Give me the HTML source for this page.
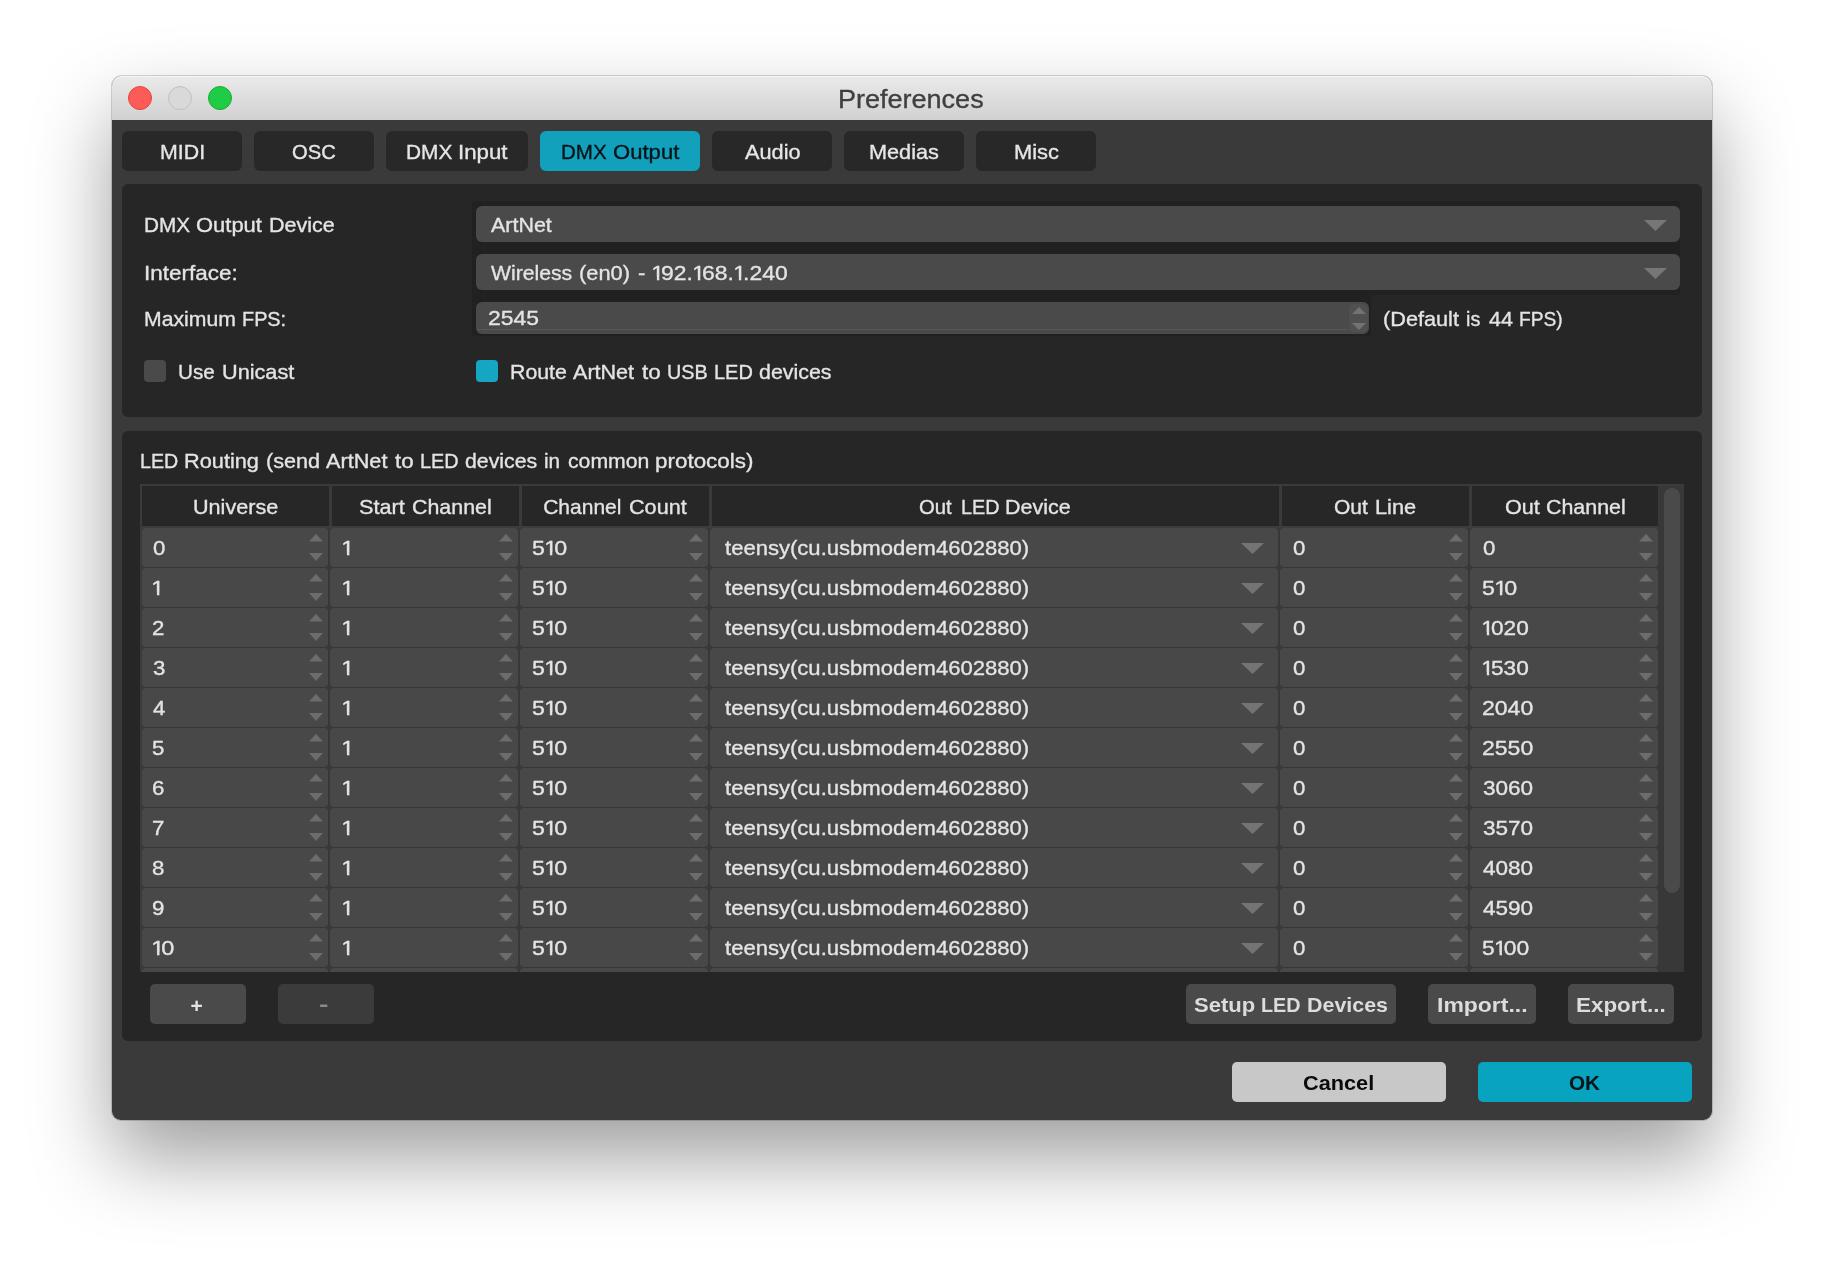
<!DOCTYPE html>
<html><head><meta charset="utf-8"><title>Preferences</title>
<style>
html,body{margin:0;padding:0;}
body{width:1824px;height:1268px;background:#fff;position:relative;overflow:hidden;font-family:"Liberation Sans",sans-serif;}
.b{position:absolute;display:block;}
.t i{font-style:normal;display:inline-block;margin:0 -2.7px 0 -0.65px;clip-path:polygon(0 0,100% 0,100% 73%,62.5% 73%,62.5% 100%,44% 100%,44% 73%,0 73%);}
.t{position:absolute;display:block;white-space:pre;transform-origin:0 0;-webkit-text-stroke:0.35px currentColor;}
#tx{position:absolute;left:0;top:0;width:1824px;height:1268px;will-change:transform;}
#win{position:absolute;left:112px;top:76px;width:1600px;height:1043.5px;border-radius:10px 10px 9px 9px;background:#3a3a3a;
 box-shadow:0 0 0 1px rgba(0,0,0,0.16),0 38px 80px rgba(0,0,0,0.38);}
#tb{position:absolute;left:112px;top:76px;width:1600px;height:44px;border-radius:10px 10px 0 0;
 background:linear-gradient(#eaeaea,#d1d1d1);box-shadow:inset 0 1px 0 #f6f6f6;}
.dot{position:absolute;top:86px;width:24px;height:24px;border-radius:50%;box-sizing:border-box;}
</style></head><body>
<div id="win"></div>
<div id="tb"></div>
<div class="dot" style="left:128px;background:#fd5b57;border:1px solid #e2463f;"></div>
<div class="dot" style="left:168px;background:#d9d9d9;border:1px solid #c2c2c2;"></div>
<div class="dot" style="left:208px;background:#1fcc46;border:1px solid #17ad33;"></div>
<div class="b" style="left:122px;top:131px;width:120px;height:40px;background:#282828;border-radius:6px;"></div>
<div class="b" style="left:254px;top:131px;width:120px;height:40px;background:#282828;border-radius:6px;"></div>
<div class="b" style="left:386px;top:131px;width:142px;height:40px;background:#282828;border-radius:6px;"></div>
<div class="b" style="left:540px;top:131px;width:160px;height:40px;background:#12a1bd;border-radius:6px;"></div>
<div class="b" style="left:712px;top:131px;width:120px;height:40px;background:#282828;border-radius:6px;"></div>
<div class="b" style="left:844px;top:131px;width:120px;height:40px;background:#282828;border-radius:6px;"></div>
<div class="b" style="left:976px;top:131px;width:120px;height:40px;background:#282828;border-radius:6px;"></div>
<div class="b" style="left:122px;top:184px;width:1580px;height:233px;background:#262626;border-radius:6px;"></div>
<div class="b" style="left:472px;top:201px;width:1208px;height:94px;background:#212121;border-radius:3px;"></div>
<div class="b" style="left:472px;top:291px;width:899px;height:45px;background:#212121;border-radius:3px;"></div>
<div class="b" style="left:476px;top:206px;width:1204px;height:36px;background:#4a4a4a;border-radius:6px;"></div>
<svg class="b" style="left:1644px;top:220px" width="23" height="11" viewBox="0 0 23 11"><path d="M0 0H23L11.5 11Z" fill="#767676"/></svg>
<div class="b" style="left:476px;top:254px;width:1204px;height:36px;background:#4a4a4a;border-radius:6px;"></div>
<svg class="b" style="left:1644px;top:268px" width="23" height="11" viewBox="0 0 23 11"><path d="M0 0H23L11.5 11Z" fill="#767676"/></svg>
<div class="b" style="left:476px;top:302px;width:893px;height:32px;background:#4a4a4a;border-radius:6px;"></div>
<div class="b" style="left:1349px;top:304px;width:19px;height:28px;background:#505050;border-radius:5px;"></div>
<div class="b" style="left:478px;top:329px;width:870px;height:1px;background:#585858;"></div>
<svg class="b" style="left:1352px;top:307px" width="14" height="7" viewBox="0 0 14 7"><path d="M0 7H14L7.0 0Z" fill="#727272"/></svg>
<svg class="b" style="left:1352px;top:323px" width="14" height="7" viewBox="0 0 14 7"><path d="M0 0H14L7.0 7Z" fill="#727272"/></svg>
<div class="b" style="left:144px;top:360px;width:22px;height:22px;background:#4a4a4a;border-radius:4px;"></div>
<div class="b" style="left:476px;top:360px;width:22px;height:22px;background:#14a6c2;border-radius:4px;"></div>
<div class="b" style="left:122px;top:431px;width:1580px;height:610px;background:#262626;border-radius:6px;"></div>
<div class="b" style="left:140px;top:484px;width:1544px;height:488px;background:#3b3b3b;"></div>
<div class="b" style="left:142px;top:486px;width:1516px;height:39.5px;background:#272727;"></div>
<div class="b" style="left:142px;top:525.5px;width:1516px;height:2.5px;background:#3d3d3d;"></div>
<div class="b" style="left:328.5px;top:486px;width:3.5px;height:40px;background:#3a3a3a;"></div>
<div class="b" style="left:518.5px;top:486px;width:3.5px;height:40px;background:#3a3a3a;"></div>
<div class="b" style="left:708.5px;top:486px;width:3.5px;height:40px;background:#3a3a3a;"></div>
<div class="b" style="left:1278.5px;top:486px;width:3.5px;height:40px;background:#3a3a3a;"></div>
<div class="b" style="left:1468.5px;top:486px;width:3.5px;height:40px;background:#3a3a3a;"></div>
<div class="b" style="left:142px;top:528px;width:1516px;height:444px;background:#383838;"></div>
<div class="b" style="left:142px;top:528px;width:186px;height:38.6px;background:#484848;border-radius:4px"></div>
<svg class="b" style="left:309px;top:534px" width="14" height="7.5" viewBox="0 0 14 7.5"><path d="M0 7.5H14L7.0 0Z" fill="#6c6c6c"/></svg>
<svg class="b" style="left:309px;top:553px" width="14" height="8" viewBox="0 0 14 8"><path d="M0 0H14L7.0 8Z" fill="#6c6c6c"/></svg>
<div class="b" style="left:142px;top:568px;width:186px;height:38.6px;background:#484848;border-radius:4px"></div>
<svg class="b" style="left:309px;top:574px" width="14" height="7.5" viewBox="0 0 14 7.5"><path d="M0 7.5H14L7.0 0Z" fill="#6c6c6c"/></svg>
<svg class="b" style="left:309px;top:593px" width="14" height="8" viewBox="0 0 14 8"><path d="M0 0H14L7.0 8Z" fill="#6c6c6c"/></svg>
<div class="b" style="left:142px;top:608px;width:186px;height:38.6px;background:#484848;border-radius:4px"></div>
<svg class="b" style="left:309px;top:614px" width="14" height="7.5" viewBox="0 0 14 7.5"><path d="M0 7.5H14L7.0 0Z" fill="#6c6c6c"/></svg>
<svg class="b" style="left:309px;top:633px" width="14" height="8" viewBox="0 0 14 8"><path d="M0 0H14L7.0 8Z" fill="#6c6c6c"/></svg>
<div class="b" style="left:142px;top:648px;width:186px;height:38.6px;background:#484848;border-radius:4px"></div>
<svg class="b" style="left:309px;top:654px" width="14" height="7.5" viewBox="0 0 14 7.5"><path d="M0 7.5H14L7.0 0Z" fill="#6c6c6c"/></svg>
<svg class="b" style="left:309px;top:673px" width="14" height="8" viewBox="0 0 14 8"><path d="M0 0H14L7.0 8Z" fill="#6c6c6c"/></svg>
<div class="b" style="left:142px;top:688px;width:186px;height:38.6px;background:#484848;border-radius:4px"></div>
<svg class="b" style="left:309px;top:694px" width="14" height="7.5" viewBox="0 0 14 7.5"><path d="M0 7.5H14L7.0 0Z" fill="#6c6c6c"/></svg>
<svg class="b" style="left:309px;top:713px" width="14" height="8" viewBox="0 0 14 8"><path d="M0 0H14L7.0 8Z" fill="#6c6c6c"/></svg>
<div class="b" style="left:142px;top:728px;width:186px;height:38.6px;background:#484848;border-radius:4px"></div>
<svg class="b" style="left:309px;top:734px" width="14" height="7.5" viewBox="0 0 14 7.5"><path d="M0 7.5H14L7.0 0Z" fill="#6c6c6c"/></svg>
<svg class="b" style="left:309px;top:753px" width="14" height="8" viewBox="0 0 14 8"><path d="M0 0H14L7.0 8Z" fill="#6c6c6c"/></svg>
<div class="b" style="left:142px;top:768px;width:186px;height:38.6px;background:#484848;border-radius:4px"></div>
<svg class="b" style="left:309px;top:774px" width="14" height="7.5" viewBox="0 0 14 7.5"><path d="M0 7.5H14L7.0 0Z" fill="#6c6c6c"/></svg>
<svg class="b" style="left:309px;top:793px" width="14" height="8" viewBox="0 0 14 8"><path d="M0 0H14L7.0 8Z" fill="#6c6c6c"/></svg>
<div class="b" style="left:142px;top:808px;width:186px;height:38.6px;background:#484848;border-radius:4px"></div>
<svg class="b" style="left:309px;top:814px" width="14" height="7.5" viewBox="0 0 14 7.5"><path d="M0 7.5H14L7.0 0Z" fill="#6c6c6c"/></svg>
<svg class="b" style="left:309px;top:833px" width="14" height="8" viewBox="0 0 14 8"><path d="M0 0H14L7.0 8Z" fill="#6c6c6c"/></svg>
<div class="b" style="left:142px;top:848px;width:186px;height:38.6px;background:#484848;border-radius:4px"></div>
<svg class="b" style="left:309px;top:854px" width="14" height="7.5" viewBox="0 0 14 7.5"><path d="M0 7.5H14L7.0 0Z" fill="#6c6c6c"/></svg>
<svg class="b" style="left:309px;top:873px" width="14" height="8" viewBox="0 0 14 8"><path d="M0 0H14L7.0 8Z" fill="#6c6c6c"/></svg>
<div class="b" style="left:142px;top:888px;width:186px;height:38.6px;background:#484848;border-radius:4px"></div>
<svg class="b" style="left:309px;top:894px" width="14" height="7.5" viewBox="0 0 14 7.5"><path d="M0 7.5H14L7.0 0Z" fill="#6c6c6c"/></svg>
<svg class="b" style="left:309px;top:913px" width="14" height="8" viewBox="0 0 14 8"><path d="M0 0H14L7.0 8Z" fill="#6c6c6c"/></svg>
<div class="b" style="left:142px;top:928px;width:186px;height:38.6px;background:#484848;border-radius:4px"></div>
<svg class="b" style="left:309px;top:934px" width="14" height="7.5" viewBox="0 0 14 7.5"><path d="M0 7.5H14L7.0 0Z" fill="#6c6c6c"/></svg>
<svg class="b" style="left:309px;top:953px" width="14" height="8" viewBox="0 0 14 8"><path d="M0 0H14L7.0 8Z" fill="#6c6c6c"/></svg>
<div class="b" style="left:142px;top:968px;width:186px;height:4px;background:#484848;border-radius:4px 4px 0 0"></div>
<div class="b" style="left:330px;top:528px;width:188px;height:38.6px;background:#484848;border-radius:4px"></div>
<svg class="b" style="left:499px;top:534px" width="14" height="7.5" viewBox="0 0 14 7.5"><path d="M0 7.5H14L7.0 0Z" fill="#6c6c6c"/></svg>
<svg class="b" style="left:499px;top:553px" width="14" height="8" viewBox="0 0 14 8"><path d="M0 0H14L7.0 8Z" fill="#6c6c6c"/></svg>
<div class="b" style="left:330px;top:568px;width:188px;height:38.6px;background:#484848;border-radius:4px"></div>
<svg class="b" style="left:499px;top:574px" width="14" height="7.5" viewBox="0 0 14 7.5"><path d="M0 7.5H14L7.0 0Z" fill="#6c6c6c"/></svg>
<svg class="b" style="left:499px;top:593px" width="14" height="8" viewBox="0 0 14 8"><path d="M0 0H14L7.0 8Z" fill="#6c6c6c"/></svg>
<div class="b" style="left:330px;top:608px;width:188px;height:38.6px;background:#484848;border-radius:4px"></div>
<svg class="b" style="left:499px;top:614px" width="14" height="7.5" viewBox="0 0 14 7.5"><path d="M0 7.5H14L7.0 0Z" fill="#6c6c6c"/></svg>
<svg class="b" style="left:499px;top:633px" width="14" height="8" viewBox="0 0 14 8"><path d="M0 0H14L7.0 8Z" fill="#6c6c6c"/></svg>
<div class="b" style="left:330px;top:648px;width:188px;height:38.6px;background:#484848;border-radius:4px"></div>
<svg class="b" style="left:499px;top:654px" width="14" height="7.5" viewBox="0 0 14 7.5"><path d="M0 7.5H14L7.0 0Z" fill="#6c6c6c"/></svg>
<svg class="b" style="left:499px;top:673px" width="14" height="8" viewBox="0 0 14 8"><path d="M0 0H14L7.0 8Z" fill="#6c6c6c"/></svg>
<div class="b" style="left:330px;top:688px;width:188px;height:38.6px;background:#484848;border-radius:4px"></div>
<svg class="b" style="left:499px;top:694px" width="14" height="7.5" viewBox="0 0 14 7.5"><path d="M0 7.5H14L7.0 0Z" fill="#6c6c6c"/></svg>
<svg class="b" style="left:499px;top:713px" width="14" height="8" viewBox="0 0 14 8"><path d="M0 0H14L7.0 8Z" fill="#6c6c6c"/></svg>
<div class="b" style="left:330px;top:728px;width:188px;height:38.6px;background:#484848;border-radius:4px"></div>
<svg class="b" style="left:499px;top:734px" width="14" height="7.5" viewBox="0 0 14 7.5"><path d="M0 7.5H14L7.0 0Z" fill="#6c6c6c"/></svg>
<svg class="b" style="left:499px;top:753px" width="14" height="8" viewBox="0 0 14 8"><path d="M0 0H14L7.0 8Z" fill="#6c6c6c"/></svg>
<div class="b" style="left:330px;top:768px;width:188px;height:38.6px;background:#484848;border-radius:4px"></div>
<svg class="b" style="left:499px;top:774px" width="14" height="7.5" viewBox="0 0 14 7.5"><path d="M0 7.5H14L7.0 0Z" fill="#6c6c6c"/></svg>
<svg class="b" style="left:499px;top:793px" width="14" height="8" viewBox="0 0 14 8"><path d="M0 0H14L7.0 8Z" fill="#6c6c6c"/></svg>
<div class="b" style="left:330px;top:808px;width:188px;height:38.6px;background:#484848;border-radius:4px"></div>
<svg class="b" style="left:499px;top:814px" width="14" height="7.5" viewBox="0 0 14 7.5"><path d="M0 7.5H14L7.0 0Z" fill="#6c6c6c"/></svg>
<svg class="b" style="left:499px;top:833px" width="14" height="8" viewBox="0 0 14 8"><path d="M0 0H14L7.0 8Z" fill="#6c6c6c"/></svg>
<div class="b" style="left:330px;top:848px;width:188px;height:38.6px;background:#484848;border-radius:4px"></div>
<svg class="b" style="left:499px;top:854px" width="14" height="7.5" viewBox="0 0 14 7.5"><path d="M0 7.5H14L7.0 0Z" fill="#6c6c6c"/></svg>
<svg class="b" style="left:499px;top:873px" width="14" height="8" viewBox="0 0 14 8"><path d="M0 0H14L7.0 8Z" fill="#6c6c6c"/></svg>
<div class="b" style="left:330px;top:888px;width:188px;height:38.6px;background:#484848;border-radius:4px"></div>
<svg class="b" style="left:499px;top:894px" width="14" height="7.5" viewBox="0 0 14 7.5"><path d="M0 7.5H14L7.0 0Z" fill="#6c6c6c"/></svg>
<svg class="b" style="left:499px;top:913px" width="14" height="8" viewBox="0 0 14 8"><path d="M0 0H14L7.0 8Z" fill="#6c6c6c"/></svg>
<div class="b" style="left:330px;top:928px;width:188px;height:38.6px;background:#484848;border-radius:4px"></div>
<svg class="b" style="left:499px;top:934px" width="14" height="7.5" viewBox="0 0 14 7.5"><path d="M0 7.5H14L7.0 0Z" fill="#6c6c6c"/></svg>
<svg class="b" style="left:499px;top:953px" width="14" height="8" viewBox="0 0 14 8"><path d="M0 0H14L7.0 8Z" fill="#6c6c6c"/></svg>
<div class="b" style="left:330px;top:968px;width:188px;height:4px;background:#484848;border-radius:4px 4px 0 0"></div>
<div class="b" style="left:520px;top:528px;width:188px;height:38.6px;background:#484848;border-radius:4px"></div>
<svg class="b" style="left:689px;top:534px" width="14" height="7.5" viewBox="0 0 14 7.5"><path d="M0 7.5H14L7.0 0Z" fill="#6c6c6c"/></svg>
<svg class="b" style="left:689px;top:553px" width="14" height="8" viewBox="0 0 14 8"><path d="M0 0H14L7.0 8Z" fill="#6c6c6c"/></svg>
<div class="b" style="left:520px;top:568px;width:188px;height:38.6px;background:#484848;border-radius:4px"></div>
<svg class="b" style="left:689px;top:574px" width="14" height="7.5" viewBox="0 0 14 7.5"><path d="M0 7.5H14L7.0 0Z" fill="#6c6c6c"/></svg>
<svg class="b" style="left:689px;top:593px" width="14" height="8" viewBox="0 0 14 8"><path d="M0 0H14L7.0 8Z" fill="#6c6c6c"/></svg>
<div class="b" style="left:520px;top:608px;width:188px;height:38.6px;background:#484848;border-radius:4px"></div>
<svg class="b" style="left:689px;top:614px" width="14" height="7.5" viewBox="0 0 14 7.5"><path d="M0 7.5H14L7.0 0Z" fill="#6c6c6c"/></svg>
<svg class="b" style="left:689px;top:633px" width="14" height="8" viewBox="0 0 14 8"><path d="M0 0H14L7.0 8Z" fill="#6c6c6c"/></svg>
<div class="b" style="left:520px;top:648px;width:188px;height:38.6px;background:#484848;border-radius:4px"></div>
<svg class="b" style="left:689px;top:654px" width="14" height="7.5" viewBox="0 0 14 7.5"><path d="M0 7.5H14L7.0 0Z" fill="#6c6c6c"/></svg>
<svg class="b" style="left:689px;top:673px" width="14" height="8" viewBox="0 0 14 8"><path d="M0 0H14L7.0 8Z" fill="#6c6c6c"/></svg>
<div class="b" style="left:520px;top:688px;width:188px;height:38.6px;background:#484848;border-radius:4px"></div>
<svg class="b" style="left:689px;top:694px" width="14" height="7.5" viewBox="0 0 14 7.5"><path d="M0 7.5H14L7.0 0Z" fill="#6c6c6c"/></svg>
<svg class="b" style="left:689px;top:713px" width="14" height="8" viewBox="0 0 14 8"><path d="M0 0H14L7.0 8Z" fill="#6c6c6c"/></svg>
<div class="b" style="left:520px;top:728px;width:188px;height:38.6px;background:#484848;border-radius:4px"></div>
<svg class="b" style="left:689px;top:734px" width="14" height="7.5" viewBox="0 0 14 7.5"><path d="M0 7.5H14L7.0 0Z" fill="#6c6c6c"/></svg>
<svg class="b" style="left:689px;top:753px" width="14" height="8" viewBox="0 0 14 8"><path d="M0 0H14L7.0 8Z" fill="#6c6c6c"/></svg>
<div class="b" style="left:520px;top:768px;width:188px;height:38.6px;background:#484848;border-radius:4px"></div>
<svg class="b" style="left:689px;top:774px" width="14" height="7.5" viewBox="0 0 14 7.5"><path d="M0 7.5H14L7.0 0Z" fill="#6c6c6c"/></svg>
<svg class="b" style="left:689px;top:793px" width="14" height="8" viewBox="0 0 14 8"><path d="M0 0H14L7.0 8Z" fill="#6c6c6c"/></svg>
<div class="b" style="left:520px;top:808px;width:188px;height:38.6px;background:#484848;border-radius:4px"></div>
<svg class="b" style="left:689px;top:814px" width="14" height="7.5" viewBox="0 0 14 7.5"><path d="M0 7.5H14L7.0 0Z" fill="#6c6c6c"/></svg>
<svg class="b" style="left:689px;top:833px" width="14" height="8" viewBox="0 0 14 8"><path d="M0 0H14L7.0 8Z" fill="#6c6c6c"/></svg>
<div class="b" style="left:520px;top:848px;width:188px;height:38.6px;background:#484848;border-radius:4px"></div>
<svg class="b" style="left:689px;top:854px" width="14" height="7.5" viewBox="0 0 14 7.5"><path d="M0 7.5H14L7.0 0Z" fill="#6c6c6c"/></svg>
<svg class="b" style="left:689px;top:873px" width="14" height="8" viewBox="0 0 14 8"><path d="M0 0H14L7.0 8Z" fill="#6c6c6c"/></svg>
<div class="b" style="left:520px;top:888px;width:188px;height:38.6px;background:#484848;border-radius:4px"></div>
<svg class="b" style="left:689px;top:894px" width="14" height="7.5" viewBox="0 0 14 7.5"><path d="M0 7.5H14L7.0 0Z" fill="#6c6c6c"/></svg>
<svg class="b" style="left:689px;top:913px" width="14" height="8" viewBox="0 0 14 8"><path d="M0 0H14L7.0 8Z" fill="#6c6c6c"/></svg>
<div class="b" style="left:520px;top:928px;width:188px;height:38.6px;background:#484848;border-radius:4px"></div>
<svg class="b" style="left:689px;top:934px" width="14" height="7.5" viewBox="0 0 14 7.5"><path d="M0 7.5H14L7.0 0Z" fill="#6c6c6c"/></svg>
<svg class="b" style="left:689px;top:953px" width="14" height="8" viewBox="0 0 14 8"><path d="M0 0H14L7.0 8Z" fill="#6c6c6c"/></svg>
<div class="b" style="left:520px;top:968px;width:188px;height:4px;background:#484848;border-radius:4px 4px 0 0"></div>
<div class="b" style="left:710px;top:528px;width:568px;height:38.6px;background:#484848;border-radius:4px"></div>
<svg class="b" style="left:1241px;top:542.5px" width="23" height="11" viewBox="0 0 23 11"><path d="M0 0H23L11.5 11Z" fill="#747474"/></svg>
<div class="b" style="left:710px;top:568px;width:568px;height:38.6px;background:#484848;border-radius:4px"></div>
<svg class="b" style="left:1241px;top:582.5px" width="23" height="11" viewBox="0 0 23 11"><path d="M0 0H23L11.5 11Z" fill="#747474"/></svg>
<div class="b" style="left:710px;top:608px;width:568px;height:38.6px;background:#484848;border-radius:4px"></div>
<svg class="b" style="left:1241px;top:622.5px" width="23" height="11" viewBox="0 0 23 11"><path d="M0 0H23L11.5 11Z" fill="#747474"/></svg>
<div class="b" style="left:710px;top:648px;width:568px;height:38.6px;background:#484848;border-radius:4px"></div>
<svg class="b" style="left:1241px;top:662.5px" width="23" height="11" viewBox="0 0 23 11"><path d="M0 0H23L11.5 11Z" fill="#747474"/></svg>
<div class="b" style="left:710px;top:688px;width:568px;height:38.6px;background:#484848;border-radius:4px"></div>
<svg class="b" style="left:1241px;top:702.5px" width="23" height="11" viewBox="0 0 23 11"><path d="M0 0H23L11.5 11Z" fill="#747474"/></svg>
<div class="b" style="left:710px;top:728px;width:568px;height:38.6px;background:#484848;border-radius:4px"></div>
<svg class="b" style="left:1241px;top:742.5px" width="23" height="11" viewBox="0 0 23 11"><path d="M0 0H23L11.5 11Z" fill="#747474"/></svg>
<div class="b" style="left:710px;top:768px;width:568px;height:38.6px;background:#484848;border-radius:4px"></div>
<svg class="b" style="left:1241px;top:782.5px" width="23" height="11" viewBox="0 0 23 11"><path d="M0 0H23L11.5 11Z" fill="#747474"/></svg>
<div class="b" style="left:710px;top:808px;width:568px;height:38.6px;background:#484848;border-radius:4px"></div>
<svg class="b" style="left:1241px;top:822.5px" width="23" height="11" viewBox="0 0 23 11"><path d="M0 0H23L11.5 11Z" fill="#747474"/></svg>
<div class="b" style="left:710px;top:848px;width:568px;height:38.6px;background:#484848;border-radius:4px"></div>
<svg class="b" style="left:1241px;top:862.5px" width="23" height="11" viewBox="0 0 23 11"><path d="M0 0H23L11.5 11Z" fill="#747474"/></svg>
<div class="b" style="left:710px;top:888px;width:568px;height:38.6px;background:#484848;border-radius:4px"></div>
<svg class="b" style="left:1241px;top:902.5px" width="23" height="11" viewBox="0 0 23 11"><path d="M0 0H23L11.5 11Z" fill="#747474"/></svg>
<div class="b" style="left:710px;top:928px;width:568px;height:38.6px;background:#484848;border-radius:4px"></div>
<svg class="b" style="left:1241px;top:942.5px" width="23" height="11" viewBox="0 0 23 11"><path d="M0 0H23L11.5 11Z" fill="#747474"/></svg>
<div class="b" style="left:710px;top:968px;width:568px;height:4px;background:#484848;border-radius:4px 4px 0 0"></div>
<div class="b" style="left:1280px;top:528px;width:188px;height:38.6px;background:#484848;border-radius:4px"></div>
<svg class="b" style="left:1449px;top:534px" width="14" height="7.5" viewBox="0 0 14 7.5"><path d="M0 7.5H14L7.0 0Z" fill="#6c6c6c"/></svg>
<svg class="b" style="left:1449px;top:553px" width="14" height="8" viewBox="0 0 14 8"><path d="M0 0H14L7.0 8Z" fill="#6c6c6c"/></svg>
<div class="b" style="left:1280px;top:568px;width:188px;height:38.6px;background:#484848;border-radius:4px"></div>
<svg class="b" style="left:1449px;top:574px" width="14" height="7.5" viewBox="0 0 14 7.5"><path d="M0 7.5H14L7.0 0Z" fill="#6c6c6c"/></svg>
<svg class="b" style="left:1449px;top:593px" width="14" height="8" viewBox="0 0 14 8"><path d="M0 0H14L7.0 8Z" fill="#6c6c6c"/></svg>
<div class="b" style="left:1280px;top:608px;width:188px;height:38.6px;background:#484848;border-radius:4px"></div>
<svg class="b" style="left:1449px;top:614px" width="14" height="7.5" viewBox="0 0 14 7.5"><path d="M0 7.5H14L7.0 0Z" fill="#6c6c6c"/></svg>
<svg class="b" style="left:1449px;top:633px" width="14" height="8" viewBox="0 0 14 8"><path d="M0 0H14L7.0 8Z" fill="#6c6c6c"/></svg>
<div class="b" style="left:1280px;top:648px;width:188px;height:38.6px;background:#484848;border-radius:4px"></div>
<svg class="b" style="left:1449px;top:654px" width="14" height="7.5" viewBox="0 0 14 7.5"><path d="M0 7.5H14L7.0 0Z" fill="#6c6c6c"/></svg>
<svg class="b" style="left:1449px;top:673px" width="14" height="8" viewBox="0 0 14 8"><path d="M0 0H14L7.0 8Z" fill="#6c6c6c"/></svg>
<div class="b" style="left:1280px;top:688px;width:188px;height:38.6px;background:#484848;border-radius:4px"></div>
<svg class="b" style="left:1449px;top:694px" width="14" height="7.5" viewBox="0 0 14 7.5"><path d="M0 7.5H14L7.0 0Z" fill="#6c6c6c"/></svg>
<svg class="b" style="left:1449px;top:713px" width="14" height="8" viewBox="0 0 14 8"><path d="M0 0H14L7.0 8Z" fill="#6c6c6c"/></svg>
<div class="b" style="left:1280px;top:728px;width:188px;height:38.6px;background:#484848;border-radius:4px"></div>
<svg class="b" style="left:1449px;top:734px" width="14" height="7.5" viewBox="0 0 14 7.5"><path d="M0 7.5H14L7.0 0Z" fill="#6c6c6c"/></svg>
<svg class="b" style="left:1449px;top:753px" width="14" height="8" viewBox="0 0 14 8"><path d="M0 0H14L7.0 8Z" fill="#6c6c6c"/></svg>
<div class="b" style="left:1280px;top:768px;width:188px;height:38.6px;background:#484848;border-radius:4px"></div>
<svg class="b" style="left:1449px;top:774px" width="14" height="7.5" viewBox="0 0 14 7.5"><path d="M0 7.5H14L7.0 0Z" fill="#6c6c6c"/></svg>
<svg class="b" style="left:1449px;top:793px" width="14" height="8" viewBox="0 0 14 8"><path d="M0 0H14L7.0 8Z" fill="#6c6c6c"/></svg>
<div class="b" style="left:1280px;top:808px;width:188px;height:38.6px;background:#484848;border-radius:4px"></div>
<svg class="b" style="left:1449px;top:814px" width="14" height="7.5" viewBox="0 0 14 7.5"><path d="M0 7.5H14L7.0 0Z" fill="#6c6c6c"/></svg>
<svg class="b" style="left:1449px;top:833px" width="14" height="8" viewBox="0 0 14 8"><path d="M0 0H14L7.0 8Z" fill="#6c6c6c"/></svg>
<div class="b" style="left:1280px;top:848px;width:188px;height:38.6px;background:#484848;border-radius:4px"></div>
<svg class="b" style="left:1449px;top:854px" width="14" height="7.5" viewBox="0 0 14 7.5"><path d="M0 7.5H14L7.0 0Z" fill="#6c6c6c"/></svg>
<svg class="b" style="left:1449px;top:873px" width="14" height="8" viewBox="0 0 14 8"><path d="M0 0H14L7.0 8Z" fill="#6c6c6c"/></svg>
<div class="b" style="left:1280px;top:888px;width:188px;height:38.6px;background:#484848;border-radius:4px"></div>
<svg class="b" style="left:1449px;top:894px" width="14" height="7.5" viewBox="0 0 14 7.5"><path d="M0 7.5H14L7.0 0Z" fill="#6c6c6c"/></svg>
<svg class="b" style="left:1449px;top:913px" width="14" height="8" viewBox="0 0 14 8"><path d="M0 0H14L7.0 8Z" fill="#6c6c6c"/></svg>
<div class="b" style="left:1280px;top:928px;width:188px;height:38.6px;background:#484848;border-radius:4px"></div>
<svg class="b" style="left:1449px;top:934px" width="14" height="7.5" viewBox="0 0 14 7.5"><path d="M0 7.5H14L7.0 0Z" fill="#6c6c6c"/></svg>
<svg class="b" style="left:1449px;top:953px" width="14" height="8" viewBox="0 0 14 8"><path d="M0 0H14L7.0 8Z" fill="#6c6c6c"/></svg>
<div class="b" style="left:1280px;top:968px;width:188px;height:4px;background:#484848;border-radius:4px 4px 0 0"></div>
<div class="b" style="left:1470px;top:528px;width:188px;height:38.6px;background:#484848;border-radius:4px"></div>
<svg class="b" style="left:1639px;top:534px" width="14" height="7.5" viewBox="0 0 14 7.5"><path d="M0 7.5H14L7.0 0Z" fill="#6c6c6c"/></svg>
<svg class="b" style="left:1639px;top:553px" width="14" height="8" viewBox="0 0 14 8"><path d="M0 0H14L7.0 8Z" fill="#6c6c6c"/></svg>
<div class="b" style="left:1470px;top:568px;width:188px;height:38.6px;background:#484848;border-radius:4px"></div>
<svg class="b" style="left:1639px;top:574px" width="14" height="7.5" viewBox="0 0 14 7.5"><path d="M0 7.5H14L7.0 0Z" fill="#6c6c6c"/></svg>
<svg class="b" style="left:1639px;top:593px" width="14" height="8" viewBox="0 0 14 8"><path d="M0 0H14L7.0 8Z" fill="#6c6c6c"/></svg>
<div class="b" style="left:1470px;top:608px;width:188px;height:38.6px;background:#484848;border-radius:4px"></div>
<svg class="b" style="left:1639px;top:614px" width="14" height="7.5" viewBox="0 0 14 7.5"><path d="M0 7.5H14L7.0 0Z" fill="#6c6c6c"/></svg>
<svg class="b" style="left:1639px;top:633px" width="14" height="8" viewBox="0 0 14 8"><path d="M0 0H14L7.0 8Z" fill="#6c6c6c"/></svg>
<div class="b" style="left:1470px;top:648px;width:188px;height:38.6px;background:#484848;border-radius:4px"></div>
<svg class="b" style="left:1639px;top:654px" width="14" height="7.5" viewBox="0 0 14 7.5"><path d="M0 7.5H14L7.0 0Z" fill="#6c6c6c"/></svg>
<svg class="b" style="left:1639px;top:673px" width="14" height="8" viewBox="0 0 14 8"><path d="M0 0H14L7.0 8Z" fill="#6c6c6c"/></svg>
<div class="b" style="left:1470px;top:688px;width:188px;height:38.6px;background:#484848;border-radius:4px"></div>
<svg class="b" style="left:1639px;top:694px" width="14" height="7.5" viewBox="0 0 14 7.5"><path d="M0 7.5H14L7.0 0Z" fill="#6c6c6c"/></svg>
<svg class="b" style="left:1639px;top:713px" width="14" height="8" viewBox="0 0 14 8"><path d="M0 0H14L7.0 8Z" fill="#6c6c6c"/></svg>
<div class="b" style="left:1470px;top:728px;width:188px;height:38.6px;background:#484848;border-radius:4px"></div>
<svg class="b" style="left:1639px;top:734px" width="14" height="7.5" viewBox="0 0 14 7.5"><path d="M0 7.5H14L7.0 0Z" fill="#6c6c6c"/></svg>
<svg class="b" style="left:1639px;top:753px" width="14" height="8" viewBox="0 0 14 8"><path d="M0 0H14L7.0 8Z" fill="#6c6c6c"/></svg>
<div class="b" style="left:1470px;top:768px;width:188px;height:38.6px;background:#484848;border-radius:4px"></div>
<svg class="b" style="left:1639px;top:774px" width="14" height="7.5" viewBox="0 0 14 7.5"><path d="M0 7.5H14L7.0 0Z" fill="#6c6c6c"/></svg>
<svg class="b" style="left:1639px;top:793px" width="14" height="8" viewBox="0 0 14 8"><path d="M0 0H14L7.0 8Z" fill="#6c6c6c"/></svg>
<div class="b" style="left:1470px;top:808px;width:188px;height:38.6px;background:#484848;border-radius:4px"></div>
<svg class="b" style="left:1639px;top:814px" width="14" height="7.5" viewBox="0 0 14 7.5"><path d="M0 7.5H14L7.0 0Z" fill="#6c6c6c"/></svg>
<svg class="b" style="left:1639px;top:833px" width="14" height="8" viewBox="0 0 14 8"><path d="M0 0H14L7.0 8Z" fill="#6c6c6c"/></svg>
<div class="b" style="left:1470px;top:848px;width:188px;height:38.6px;background:#484848;border-radius:4px"></div>
<svg class="b" style="left:1639px;top:854px" width="14" height="7.5" viewBox="0 0 14 7.5"><path d="M0 7.5H14L7.0 0Z" fill="#6c6c6c"/></svg>
<svg class="b" style="left:1639px;top:873px" width="14" height="8" viewBox="0 0 14 8"><path d="M0 0H14L7.0 8Z" fill="#6c6c6c"/></svg>
<div class="b" style="left:1470px;top:888px;width:188px;height:38.6px;background:#484848;border-radius:4px"></div>
<svg class="b" style="left:1639px;top:894px" width="14" height="7.5" viewBox="0 0 14 7.5"><path d="M0 7.5H14L7.0 0Z" fill="#6c6c6c"/></svg>
<svg class="b" style="left:1639px;top:913px" width="14" height="8" viewBox="0 0 14 8"><path d="M0 0H14L7.0 8Z" fill="#6c6c6c"/></svg>
<div class="b" style="left:1470px;top:928px;width:188px;height:38.6px;background:#484848;border-radius:4px"></div>
<svg class="b" style="left:1639px;top:934px" width="14" height="7.5" viewBox="0 0 14 7.5"><path d="M0 7.5H14L7.0 0Z" fill="#6c6c6c"/></svg>
<svg class="b" style="left:1639px;top:953px" width="14" height="8" viewBox="0 0 14 8"><path d="M0 0H14L7.0 8Z" fill="#6c6c6c"/></svg>
<div class="b" style="left:1470px;top:968px;width:188px;height:4px;background:#484848;border-radius:4px 4px 0 0"></div>
<div class="b" style="left:1658px;top:486px;width:26px;height:486px;background:#383838;"></div>
<div class="b" style="left:1664px;top:488px;width:16px;height:405px;background:#4a4a4a;border-radius:8px;"></div>
<div class="b" style="left:150px;top:984px;width:96px;height:40px;background:#4a4a4a;border-radius:5px;"></div>
<div class="b" style="left:278px;top:984px;width:96px;height:40px;background:#3b3b3b;border-radius:5px;"></div>
<div class="b" style="left:1186px;top:984px;width:210px;height:40px;background:#4a4a4a;border-radius:5px;"></div>
<div class="b" style="left:1428px;top:984px;width:108px;height:40px;background:#4a4a4a;border-radius:5px;"></div>
<div class="b" style="left:1568px;top:984px;width:106px;height:40px;background:#4a4a4a;border-radius:5px;"></div>
<div class="b" style="left:1232px;top:1062px;width:214px;height:40px;background:#c8c8c8;border-radius:5px;"></div>
<div class="b" style="left:1478px;top:1062px;width:214px;height:40px;background:#08a4bf;border-radius:5px;"></div>
<div id="tx">
<span class="t" style="left:838.26px;top:85.87px;font-size:26.5px;line-height:26.5px;height:26.5px;color:#3f3f3f;transform:scaleX(1.0193);">Preferences</span>
<span class="t" style="left:159.78px;top:140.92px;font-size:21px;line-height:21px;height:21px;color:#e6e6e6;transform:scaleX(1.0167);">MIDI</span>
<span class="t" style="left:291.84px;top:140.92px;font-size:21px;line-height:21px;height:21px;color:#e6e6e6;transform:scaleX(0.9614);">OSC</span>
<span class="t" style="left:406.31px;top:140.92px;font-size:21px;line-height:21px;height:21px;color:#e6e6e6;transform:scaleX(0.9933);">DMX</span>
<span class="t" style="left:457.84px;top:140.92px;font-size:21px;line-height:21px;height:21px;color:#e6e6e6;transform:scaleX(1.0609);">Input</span>
<span class="t" style="left:560.82px;top:140.92px;font-size:21px;line-height:21px;height:21px;color:#06141a;transform:scaleX(0.9778);">DMX</span>
<span class="t" style="left:612.55px;top:140.92px;font-size:21px;line-height:21px;height:21px;color:#06141a;transform:scaleX(1.0516);">Output</span>
<span class="t" style="left:744.90px;top:140.92px;font-size:21px;line-height:21px;height:21px;color:#e6e6e6;transform:scaleX(1.0340);">Audio</span>
<span class="t" style="left:869.27px;top:140.92px;font-size:21px;line-height:21px;height:21px;color:#e6e6e6;transform:scaleX(1.0318);">Medias</span>
<span class="t" style="left:1013.56px;top:140.92px;font-size:21px;line-height:21px;height:21px;color:#e6e6e6;transform:scaleX(1.0429);">Misc</span>
<span class="t" style="left:144.11px;top:214.22px;font-size:21px;line-height:21px;height:21px;color:#e4e4e4;transform:scaleX(0.9867);">DMX</span>
<span class="t" style="left:196.25px;top:214.22px;font-size:21px;line-height:21px;height:21px;color:#e4e4e4;transform:scaleX(1.0452);">Output</span>
<span class="t" style="left:268.87px;top:214.22px;font-size:21px;line-height:21px;height:21px;color:#e4e4e4;transform:scaleX(1.0254);">Device</span>
<span class="t" style="left:144.03px;top:262.22px;font-size:21px;line-height:21px;height:21px;color:#e4e4e4;transform:scaleX(1.0706);">Interface:</span>
<span class="t" style="left:144.09px;top:308.22px;font-size:21px;line-height:21px;height:21px;color:#e4e4e4;transform:scaleX(1.0090);">Maximum</span>
<span class="t" style="left:241.85px;top:308.22px;font-size:21px;line-height:21px;height:21px;color:#e4e4e4;transform:scaleX(0.9455);">FPS:</span>
<span class="t" style="left:491.30px;top:214.22px;font-size:21px;line-height:21px;height:21px;color:#e4e4e4;transform:scaleX(1.0217);">ArtNet</span>
<span class="t" style="left:491.10px;top:261.82px;font-size:21px;line-height:21px;height:21px;color:#e4e4e4;transform:scaleX(1.0088);">Wireless</span>
<span class="t" style="left:578.66px;top:261.82px;font-size:21px;line-height:21px;height:21px;color:#e4e4e4;transform:scaleX(1.0383);">(en0)</span>
<span class="t" style="left:637.60px;top:261.82px;font-size:21px;line-height:21px;height:21px;color:#e4e4e4;transform:scaleX(1.0571);">-</span>
<span class="t" style="left:652.31px;top:261.82px;font-size:21px;line-height:21px;height:21px;color:#e4e4e4;transform:scaleX(1.0911);"><i>1</i>92.<i>1</i>68.<i>1</i>.240</span>
<span class="t" style="left:488.01px;top:307.22px;font-size:21px;line-height:21px;height:21px;color:#e4e4e4;transform:scaleX(1.0911);">2545</span>
<span class="t" style="left:178.12px;top:360.82px;font-size:21px;line-height:21px;height:21px;color:#e4e4e4;transform:scaleX(0.9833);">Use</span>
<span class="t" style="left:221.67px;top:360.82px;font-size:21px;line-height:21px;height:21px;color:#e4e4e4;transform:scaleX(1.0319);">Unicast</span>
<span class="t" style="left:510.39px;top:360.82px;font-size:21px;line-height:21px;height:21px;color:#e4e4e4;transform:scaleX(1.0148);">Route</span>
<span class="t" style="left:573.30px;top:360.82px;font-size:21px;line-height:21px;height:21px;color:#e4e4e4;transform:scaleX(1.0267);">ArtNet</span>
<span class="t" style="left:642.20px;top:360.82px;font-size:21px;line-height:21px;height:21px;color:#e4e4e4;transform:scaleX(1.0706);">to</span>
<span class="t" style="left:666.66px;top:360.82px;font-size:21px;line-height:21px;height:21px;color:#e4e4e4;transform:scaleX(0.9415);">USB</span>
<span class="t" style="left:713.55px;top:360.82px;font-size:21px;line-height:21px;height:21px;color:#e4e4e4;transform:scaleX(0.9513);">LED</span>
<span class="t" style="left:759.30px;top:360.82px;font-size:21px;line-height:21px;height:21px;color:#e4e4e4;transform:scaleX(1.0183);">devices</span>
<span class="t" style="left:1383.37px;top:308.02px;font-size:21px;line-height:21px;height:21px;color:#e4e4e4;transform:scaleX(1.0329);">(Default</span>
<span class="t" style="left:1466.36px;top:308.02px;font-size:21px;line-height:21px;height:21px;color:#e4e4e4;transform:scaleX(0.9429);">is</span>
<span class="t" style="left:1488.60px;top:308.02px;font-size:21px;line-height:21px;height:21px;color:#e4e4e4;transform:scaleX(1.0261);">44</span>
<span class="t" style="left:1519.39px;top:308.02px;font-size:21px;line-height:21px;height:21px;color:#e4e4e4;transform:scaleX(0.9130);">FPS)</span>
<span class="t" style="left:140.16px;top:449.62px;font-size:21px;line-height:21px;height:21px;color:#e4e4e4;transform:scaleX(0.9359);">LED</span>
<span class="t" style="left:184.26px;top:449.62px;font-size:21px;line-height:21px;height:21px;color:#e4e4e4;transform:scaleX(1.0357);">Routing</span>
<span class="t" style="left:265.57px;top:449.62px;font-size:21px;line-height:21px;height:21px;color:#e4e4e4;transform:scaleX(1.0280);">(send</span>
<span class="t" style="left:325.70px;top:449.62px;font-size:21px;line-height:21px;height:21px;color:#e4e4e4;transform:scaleX(1.0317);">ArtNet</span>
<span class="t" style="left:394.60px;top:449.62px;font-size:21px;line-height:21px;height:21px;color:#e4e4e4;transform:scaleX(1.0647);">to</span>
<span class="t" style="left:419.55px;top:449.62px;font-size:21px;line-height:21px;height:21px;color:#e4e4e4;transform:scaleX(0.9462);">LED</span>
<span class="t" style="left:464.90px;top:449.62px;font-size:21px;line-height:21px;height:21px;color:#e4e4e4;transform:scaleX(1.0141);">devices</span>
<span class="t" style="left:543.81px;top:449.62px;font-size:21px;line-height:21px;height:21px;color:#e4e4e4;transform:scaleX(0.9867);">in</span>
<span class="t" style="left:567.50px;top:449.62px;font-size:21px;line-height:21px;height:21px;color:#e4e4e4;transform:scaleX(1.0112);">common</span>
<span class="t" style="left:655.23px;top:449.62px;font-size:21px;line-height:21px;height:21px;color:#e4e4e4;transform:scaleX(1.0678);">protocols)</span>
<span class="t" style="left:192.87px;top:496.22px;font-size:21px;line-height:21px;height:21px;color:#e4e4e4;transform:scaleX(1.0284);">Universe</span>
<span class="t" style="left:358.57px;top:496.22px;font-size:21px;line-height:21px;height:21px;color:#e4e4e4;transform:scaleX(1.0318);">Start</span>
<span class="t" style="left:412.18px;top:496.22px;font-size:21px;line-height:21px;height:21px;color:#e4e4e4;transform:scaleX(1.0184);">Channel</span>
<span class="t" style="left:543.20px;top:496.22px;font-size:21px;line-height:21px;height:21px;color:#e4e4e4;">Channel</span>
<span class="t" style="left:628.67px;top:496.22px;font-size:21px;line-height:21px;height:21px;color:#e4e4e4;transform:scaleX(1.0291);">Count</span>
<span class="t" style="left:919.33px;top:496.22px;font-size:21px;line-height:21px;height:21px;color:#e4e4e4;transform:scaleX(0.9667);">Out</span>
<span class="t" style="left:960.56px;top:496.22px;font-size:21px;line-height:21px;height:21px;color:#e4e4e4;transform:scaleX(0.9436);">LED</span>
<span class="t" style="left:1004.88px;top:496.22px;font-size:21px;line-height:21px;height:21px;color:#e4e4e4;transform:scaleX(1.0222);">Device</span>
<span class="t" style="left:1334.00px;top:496.22px;font-size:21px;line-height:21px;height:21px;color:#e4e4e4;">Out</span>
<span class="t" style="left:1374.76px;top:496.22px;font-size:21px;line-height:21px;height:21px;color:#e4e4e4;transform:scaleX(1.0368);">Line</span>
<span class="t" style="left:1504.67px;top:496.22px;font-size:21px;line-height:21px;height:21px;color:#e4e4e4;transform:scaleX(1.0273);">Out</span>
<span class="t" style="left:1545.78px;top:496.22px;font-size:21px;line-height:21px;height:21px;color:#e4e4e4;transform:scaleX(1.0197);">Channel</span>
<span class="t" style="left:152.90px;top:537.22px;font-size:21px;line-height:21px;height:21px;color:#e4e4e4;transform:scaleX(1.0600);">0</span>
<span class="t" style="left:342.30px;top:537.22px;font-size:21px;line-height:21px;height:21px;color:#e4e4e4;transform:scaleX(1.1000);"><i>1</i></span>
<span class="t" style="left:532.39px;top:537.22px;font-size:21px;line-height:21px;height:21px;color:#e4e4e4;transform:scaleX(1.1050);">5<i>1</i>0</span>
<span class="t" style="left:725.30px;top:537.22px;font-size:21px;line-height:21px;height:21px;color:#e4e4e4;transform:scaleX(1.0505);">teensy(cu.usbmodem4602880)</span>
<span class="t" style="left:1293.10px;top:537.22px;font-size:21px;line-height:21px;height:21px;color:#e4e4e4;transform:scaleX(1.0600);">0</span>
<span class="t" style="left:1483.00px;top:537.22px;font-size:21px;line-height:21px;height:21px;color:#e4e4e4;transform:scaleX(1.0600);">0</span>
<span class="t" style="left:152.40px;top:577.22px;font-size:21px;line-height:21px;height:21px;color:#e4e4e4;transform:scaleX(1.1000);"><i>1</i></span>
<span class="t" style="left:342.30px;top:577.22px;font-size:21px;line-height:21px;height:21px;color:#e4e4e4;transform:scaleX(1.1000);"><i>1</i></span>
<span class="t" style="left:532.39px;top:577.22px;font-size:21px;line-height:21px;height:21px;color:#e4e4e4;transform:scaleX(1.1050);">5<i>1</i>0</span>
<span class="t" style="left:725.30px;top:577.22px;font-size:21px;line-height:21px;height:21px;color:#e4e4e4;transform:scaleX(1.0505);">teensy(cu.usbmodem4602880)</span>
<span class="t" style="left:1293.10px;top:577.22px;font-size:21px;line-height:21px;height:21px;color:#e4e4e4;transform:scaleX(1.0600);">0</span>
<span class="t" style="left:1481.89px;top:577.22px;font-size:21px;line-height:21px;height:21px;color:#e4e4e4;transform:scaleX(1.1050);">5<i>1</i>0</span>
<span class="t" style="left:151.84px;top:617.22px;font-size:21px;line-height:21px;height:21px;color:#e4e4e4;transform:scaleX(1.0600);">2</span>
<span class="t" style="left:342.30px;top:617.22px;font-size:21px;line-height:21px;height:21px;color:#e4e4e4;transform:scaleX(1.1000);"><i>1</i></span>
<span class="t" style="left:532.39px;top:617.22px;font-size:21px;line-height:21px;height:21px;color:#e4e4e4;transform:scaleX(1.1050);">5<i>1</i>0</span>
<span class="t" style="left:725.30px;top:617.22px;font-size:21px;line-height:21px;height:21px;color:#e4e4e4;transform:scaleX(1.0505);">teensy(cu.usbmodem4602880)</span>
<span class="t" style="left:1293.10px;top:617.22px;font-size:21px;line-height:21px;height:21px;color:#e4e4e4;transform:scaleX(1.0600);">0</span>
<span class="t" style="left:1482.42px;top:617.22px;font-size:21px;line-height:21px;height:21px;color:#e4e4e4;transform:scaleX(1.0762);"><i>1</i>020</span>
<span class="t" style="left:152.90px;top:657.22px;font-size:21px;line-height:21px;height:21px;color:#e4e4e4;transform:scaleX(1.0600);">3</span>
<span class="t" style="left:342.30px;top:657.22px;font-size:21px;line-height:21px;height:21px;color:#e4e4e4;transform:scaleX(1.1000);"><i>1</i></span>
<span class="t" style="left:532.39px;top:657.22px;font-size:21px;line-height:21px;height:21px;color:#e4e4e4;transform:scaleX(1.1050);">5<i>1</i>0</span>
<span class="t" style="left:725.30px;top:657.22px;font-size:21px;line-height:21px;height:21px;color:#e4e4e4;transform:scaleX(1.0505);">teensy(cu.usbmodem4602880)</span>
<span class="t" style="left:1293.10px;top:657.22px;font-size:21px;line-height:21px;height:21px;color:#e4e4e4;transform:scaleX(1.0600);">0</span>
<span class="t" style="left:1482.42px;top:657.22px;font-size:21px;line-height:21px;height:21px;color:#e4e4e4;transform:scaleX(1.0762);"><i>1</i>530</span>
<span class="t" style="left:152.90px;top:697.22px;font-size:21px;line-height:21px;height:21px;color:#e4e4e4;transform:scaleX(1.0600);">4</span>
<span class="t" style="left:342.30px;top:697.22px;font-size:21px;line-height:21px;height:21px;color:#e4e4e4;transform:scaleX(1.1000);"><i>1</i></span>
<span class="t" style="left:532.39px;top:697.22px;font-size:21px;line-height:21px;height:21px;color:#e4e4e4;transform:scaleX(1.1050);">5<i>1</i>0</span>
<span class="t" style="left:725.30px;top:697.22px;font-size:21px;line-height:21px;height:21px;color:#e4e4e4;transform:scaleX(1.0505);">teensy(cu.usbmodem4602880)</span>
<span class="t" style="left:1293.10px;top:697.22px;font-size:21px;line-height:21px;height:21px;color:#e4e4e4;transform:scaleX(1.0600);">0</span>
<span class="t" style="left:1481.90px;top:697.22px;font-size:21px;line-height:21px;height:21px;color:#e4e4e4;transform:scaleX(1.0967);">2040</span>
<span class="t" style="left:151.84px;top:737.22px;font-size:21px;line-height:21px;height:21px;color:#e4e4e4;transform:scaleX(1.0600);">5</span>
<span class="t" style="left:342.30px;top:737.22px;font-size:21px;line-height:21px;height:21px;color:#e4e4e4;transform:scaleX(1.1000);"><i>1</i></span>
<span class="t" style="left:532.39px;top:737.22px;font-size:21px;line-height:21px;height:21px;color:#e4e4e4;transform:scaleX(1.1050);">5<i>1</i>0</span>
<span class="t" style="left:725.30px;top:737.22px;font-size:21px;line-height:21px;height:21px;color:#e4e4e4;transform:scaleX(1.0505);">teensy(cu.usbmodem4602880)</span>
<span class="t" style="left:1293.10px;top:737.22px;font-size:21px;line-height:21px;height:21px;color:#e4e4e4;transform:scaleX(1.0600);">0</span>
<span class="t" style="left:1481.90px;top:737.22px;font-size:21px;line-height:21px;height:21px;color:#e4e4e4;transform:scaleX(1.0967);">2550</span>
<span class="t" style="left:151.84px;top:777.22px;font-size:21px;line-height:21px;height:21px;color:#e4e4e4;transform:scaleX(1.0600);">6</span>
<span class="t" style="left:342.30px;top:777.22px;font-size:21px;line-height:21px;height:21px;color:#e4e4e4;transform:scaleX(1.1000);"><i>1</i></span>
<span class="t" style="left:532.39px;top:777.22px;font-size:21px;line-height:21px;height:21px;color:#e4e4e4;transform:scaleX(1.1050);">5<i>1</i>0</span>
<span class="t" style="left:725.30px;top:777.22px;font-size:21px;line-height:21px;height:21px;color:#e4e4e4;transform:scaleX(1.0505);">teensy(cu.usbmodem4602880)</span>
<span class="t" style="left:1293.10px;top:777.22px;font-size:21px;line-height:21px;height:21px;color:#e4e4e4;transform:scaleX(1.0600);">0</span>
<span class="t" style="left:1483.00px;top:777.22px;font-size:21px;line-height:21px;height:21px;color:#e4e4e4;transform:scaleX(1.0728);">3060</span>
<span class="t" style="left:151.84px;top:817.22px;font-size:21px;line-height:21px;height:21px;color:#e4e4e4;transform:scaleX(1.0600);">7</span>
<span class="t" style="left:342.30px;top:817.22px;font-size:21px;line-height:21px;height:21px;color:#e4e4e4;transform:scaleX(1.1000);"><i>1</i></span>
<span class="t" style="left:532.39px;top:817.22px;font-size:21px;line-height:21px;height:21px;color:#e4e4e4;transform:scaleX(1.1050);">5<i>1</i>0</span>
<span class="t" style="left:725.30px;top:817.22px;font-size:21px;line-height:21px;height:21px;color:#e4e4e4;transform:scaleX(1.0505);">teensy(cu.usbmodem4602880)</span>
<span class="t" style="left:1293.10px;top:817.22px;font-size:21px;line-height:21px;height:21px;color:#e4e4e4;transform:scaleX(1.0600);">0</span>
<span class="t" style="left:1483.00px;top:817.22px;font-size:21px;line-height:21px;height:21px;color:#e4e4e4;transform:scaleX(1.0728);">3570</span>
<span class="t" style="left:151.84px;top:857.22px;font-size:21px;line-height:21px;height:21px;color:#e4e4e4;transform:scaleX(1.0600);">8</span>
<span class="t" style="left:342.30px;top:857.22px;font-size:21px;line-height:21px;height:21px;color:#e4e4e4;transform:scaleX(1.1000);"><i>1</i></span>
<span class="t" style="left:532.39px;top:857.22px;font-size:21px;line-height:21px;height:21px;color:#e4e4e4;transform:scaleX(1.1050);">5<i>1</i>0</span>
<span class="t" style="left:725.30px;top:857.22px;font-size:21px;line-height:21px;height:21px;color:#e4e4e4;transform:scaleX(1.0505);">teensy(cu.usbmodem4602880)</span>
<span class="t" style="left:1293.10px;top:857.22px;font-size:21px;line-height:21px;height:21px;color:#e4e4e4;transform:scaleX(1.0600);">0</span>
<span class="t" style="left:1483.00px;top:857.22px;font-size:21px;line-height:21px;height:21px;color:#e4e4e4;transform:scaleX(1.0728);">4080</span>
<span class="t" style="left:151.84px;top:897.22px;font-size:21px;line-height:21px;height:21px;color:#e4e4e4;transform:scaleX(1.0600);">9</span>
<span class="t" style="left:342.30px;top:897.22px;font-size:21px;line-height:21px;height:21px;color:#e4e4e4;transform:scaleX(1.1000);"><i>1</i></span>
<span class="t" style="left:532.39px;top:897.22px;font-size:21px;line-height:21px;height:21px;color:#e4e4e4;transform:scaleX(1.1050);">5<i>1</i>0</span>
<span class="t" style="left:725.30px;top:897.22px;font-size:21px;line-height:21px;height:21px;color:#e4e4e4;transform:scaleX(1.0505);">teensy(cu.usbmodem4602880)</span>
<span class="t" style="left:1293.10px;top:897.22px;font-size:21px;line-height:21px;height:21px;color:#e4e4e4;transform:scaleX(1.0600);">0</span>
<span class="t" style="left:1483.00px;top:897.22px;font-size:21px;line-height:21px;height:21px;color:#e4e4e4;transform:scaleX(1.0728);">4590</span>
<span class="t" style="left:152.28px;top:937.22px;font-size:21px;line-height:21px;height:21px;color:#e4e4e4;transform:scaleX(1.1167);"><i>1</i>0</span>
<span class="t" style="left:342.30px;top:937.22px;font-size:21px;line-height:21px;height:21px;color:#e4e4e4;transform:scaleX(1.1000);"><i>1</i></span>
<span class="t" style="left:532.39px;top:937.22px;font-size:21px;line-height:21px;height:21px;color:#e4e4e4;transform:scaleX(1.1050);">5<i>1</i>0</span>
<span class="t" style="left:725.30px;top:937.22px;font-size:21px;line-height:21px;height:21px;color:#e4e4e4;transform:scaleX(1.0505);">teensy(cu.usbmodem4602880)</span>
<span class="t" style="left:1293.10px;top:937.22px;font-size:21px;line-height:21px;height:21px;color:#e4e4e4;transform:scaleX(1.0600);">0</span>
<span class="t" style="left:1481.91px;top:937.22px;font-size:21px;line-height:21px;height:21px;color:#e4e4e4;transform:scaleX(1.0881);">5<i>1</i>00</span>
<span class="t" style="left:190.60px;top:994.72px;font-size:21px;line-height:21px;height:21px;color:#e4e4e4;font-weight:700;-webkit-text-stroke:0;">+</span>
<span class="t" style="left:319.25px;top:992.52px;font-size:21px;line-height:21px;height:21px;color:#8a8a8a;font-weight:700;-webkit-text-stroke:0;transform:scaleX(1.3500);">-</span>
<span class="t" style="left:1194.15px;top:993.92px;font-size:21px;line-height:21px;height:21px;color:#dcdcdc;font-weight:700;-webkit-text-stroke:0;transform:scaleX(1.0491);">Setup</span>
<span class="t" style="left:1261.36px;top:993.92px;font-size:21px;line-height:21px;height:21px;color:#dcdcdc;font-weight:700;-webkit-text-stroke:0;transform:scaleX(0.9425);">LED</span>
<span class="t" style="left:1306.68px;top:993.92px;font-size:21px;line-height:21px;height:21px;color:#dcdcdc;font-weight:700;-webkit-text-stroke:0;transform:scaleX(1.0205);">Devices</span>
<span class="t" style="left:1436.61px;top:993.92px;font-size:21px;line-height:21px;height:21px;color:#dcdcdc;font-weight:700;-webkit-text-stroke:0;transform:scaleX(1.0938);">Import...</span>
<span class="t" style="left:1576.13px;top:993.92px;font-size:21px;line-height:21px;height:21px;color:#dcdcdc;font-weight:700;-webkit-text-stroke:0;transform:scaleX(1.0671);">Export...</span>
<span class="t" style="left:1302.77px;top:1071.72px;font-size:21px;line-height:21px;height:21px;color:#0a0a0a;font-weight:700;-webkit-text-stroke:0;transform:scaleX(1.0343);">Cancel</span>
<span class="t" style="left:1569.31px;top:1071.72px;font-size:21px;line-height:21px;height:21px;color:#04141a;font-weight:700;-webkit-text-stroke:0;transform:scaleX(0.9867);">OK</span>
</div>
</body></html>
